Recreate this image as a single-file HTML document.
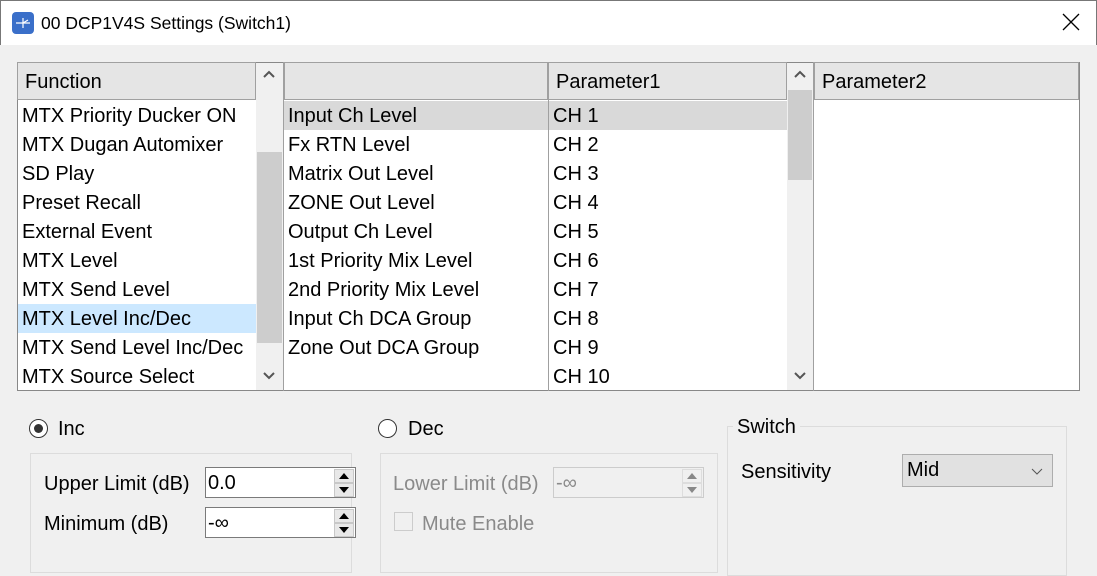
<!DOCTYPE html>
<html><head><meta charset="utf-8"><style>
*{box-sizing:border-box;margin:0;padding:0}
body{width:1097px;height:561px;overflow:hidden;background:#f0f0f0;font-family:"Liberation Sans",sans-serif;font-size:20px;color:#000;position:relative}
.a{position:absolute}
svg{display:block}
.title{left:0;top:0;width:1097px;height:45px;background:#fff;border-left:1px solid #777;border-top:1px solid #777;border-right:1px solid #777}
.hdr{background:#e5e5e5;border:1px solid #a0a0a0;height:38px;line-height:38px;padding-left:7px}
.row{position:absolute;height:29px;line-height:30px;padding-left:4px;white-space:nowrap}
.sb{background:#f0f0f0}
.dis{color:#8a8a8a}
.spin{background:#fff;border:1px solid #7a7a7a;height:31px;line-height:30px;padding-left:2px}
.btn{position:absolute;right:1px;width:20px;height:14px;background:#e8e8e8;border:1px solid #c8c8c8}
</style></head><body>
<div class="a title"></div>
<div class="a" style="left:12px;top:12px;width:22px;height:22px;background:#3a6fc9;border-radius:4px">
<svg width="22" height="22"><path d="M4 11H18M11 6V16M11 11L16 8" stroke="#fff" stroke-width="1.2" fill="none"/></svg></div>
<div class="a" style="left:41px;top:13px;font-size:17.5px">00 DCP1V4S Settings (Switch1)</div>
<svg class="a" style="left:1062px;top:13px" width="18" height="18"><path d="M1 1L17 17M17 1L1 17" stroke="#000" stroke-width="1.3"/></svg>

<div class="a" style="left:17px;top:62px;width:1063px;height:329px;background:#fff;border:1px solid #888"></div>
<div class="a hdr" style="left:17px;top:62px;width:239px">Function</div>
<div class="a sb" style="left:256px;top:63px;width:27px;height:327px"></div>
<div class="a" style="left:257px;top:152px;width:25px;height:191px;background:#cdcdcd"></div>
<svg class="a" style="left:262px;top:68px" width="14" height="12"><path d="M2 9L7 4L12 9" stroke="#555" stroke-width="2" fill="none"/></svg>
<svg class="a" style="left:262px;top:370px" width="14" height="12"><path d="M2 3L7 8L12 3" stroke="#555" stroke-width="2" fill="none"/></svg>
<div class="a" style="left:283px;top:62px;width:1px;height:329px;background:#a0a0a0"></div>
<div class="a hdr" style="left:284px;top:62px;width:264px"></div>
<div class="a" style="left:548px;top:62px;width:1px;height:329px;background:#a0a0a0"></div>
<div class="a hdr" style="left:548px;top:62px;width:239px">Parameter1</div>
<div class="a sb" style="left:787px;top:63px;width:26px;height:327px"></div>
<div class="a" style="left:788px;top:90px;width:24px;height:90px;background:#cdcdcd"></div>
<svg class="a" style="left:793px;top:68px" width="14" height="12"><path d="M2 9L7 4L12 9" stroke="#555" stroke-width="2" fill="none"/></svg>
<svg class="a" style="left:793px;top:370px" width="14" height="12"><path d="M2 3L7 8L12 3" stroke="#555" stroke-width="2" fill="none"/></svg>
<div class="a" style="left:813px;top:62px;width:1px;height:329px;background:#a0a0a0"></div>
<div class="a hdr" style="left:814px;top:62px;width:265px">Parameter2</div>

<div class="a" style="left:18px;top:101px;width:238px;height:289px;overflow:hidden">
<div class="row" style="top:0">MTX Priority Ducker ON</div>
<div class="row" style="top:29px">MTX Dugan Automixer</div>
<div class="row" style="top:58px">SD Play</div>
<div class="row" style="top:87px">Preset Recall</div>
<div class="row" style="top:116px">External Event</div>
<div class="row" style="top:145px">MTX Level</div>
<div class="row" style="top:174px">MTX Send Level</div>
<div class="row" style="top:203px;width:238px;background:#cce8ff">MTX Level Inc/Dec</div>
<div class="row" style="top:232px">MTX Send Level Inc/Dec</div>
<div class="row" style="top:261px">MTX Source Select</div>
</div>
<div class="a" style="left:284px;top:101px;width:264px;height:289px;overflow:hidden">
<div class="row" style="top:0;width:264px;background:#d9d9d9">Input Ch Level</div>
<div class="row" style="top:29px">Fx RTN Level</div>
<div class="row" style="top:58px">Matrix Out Level</div>
<div class="row" style="top:87px">ZONE Out Level</div>
<div class="row" style="top:116px">Output Ch Level</div>
<div class="row" style="top:145px">1st Priority Mix Level</div>
<div class="row" style="top:174px">2nd Priority Mix Level</div>
<div class="row" style="top:203px">Input Ch DCA Group</div>
<div class="row" style="top:232px">Zone Out DCA Group</div>
</div>
<div class="a" style="left:549px;top:101px;width:238px;height:289px;overflow:hidden">
<div class="row" style="top:0;width:238px;background:#d9d9d9">CH 1</div>
<div class="row" style="top:29px">CH 2</div>
<div class="row" style="top:58px">CH 3</div>
<div class="row" style="top:87px">CH 4</div>
<div class="row" style="top:116px">CH 5</div>
<div class="row" style="top:145px">CH 6</div>
<div class="row" style="top:174px">CH 7</div>
<div class="row" style="top:203px">CH 8</div>
<div class="row" style="top:232px">CH 9</div>
<div class="row" style="top:261px">CH 10</div>
</div>

<div class="a" style="left:29px;top:419px;width:19px;height:19px;border-radius:50%;border:1px solid #333;background:#fff"></div>
<div class="a" style="left:34px;top:424px;width:9px;height:9px;border-radius:50%;background:#333"></div>
<div class="a" style="left:58px;top:418px">Inc</div>
<div class="a" style="left:378px;top:419px;width:19px;height:19px;border-radius:50%;border:1px solid #333;background:#fff"></div>
<div class="a" style="left:408px;top:418px">Dec</div>

<div class="a" style="left:30px;top:453px;width:322px;height:120px;border:1px solid #dcdcdc"></div>
<div class="a" style="left:380px;top:453px;width:338px;height:120px;border:1px solid #dcdcdc"></div>
<div class="a" style="left:727px;top:426px;width:340px;height:150px;border:1px solid #dcdcdc"></div>
<div class="a" style="left:733px;top:416px;background:#f0f0f0;padding:0 4px">Switch</div>

<div class="a" style="left:44px;top:473px">Upper Limit (dB)</div>
<div class="a spin" style="left:205px;top:467px;width:151px">0.0<div class="btn" style="top:1px"><svg width="18" height="12"><path d="M4 9L9 3L14 9Z" fill="#000"/></svg></div><div class="btn" style="top:15px"><svg width="18" height="12"><path d="M4 3L9 9L14 3Z" fill="#000"/></svg></div></div>
<div class="a" style="left:44px;top:513px">Minimum (dB)</div>
<div class="a spin" style="left:205px;top:507px;width:151px">-∞<div class="btn" style="top:1px"><svg width="18" height="12"><path d="M4 9L9 3L14 9Z" fill="#000"/></svg></div><div class="btn" style="top:15px"><svg width="18" height="12"><path d="M4 3L9 9L14 3Z" fill="#000"/></svg></div></div>

<div class="a dis" style="left:393px;top:473px">Lower Limit (dB)</div>
<div class="a spin dis" style="left:553px;top:467px;width:151px;background:#f0f0f0;border-color:#ccc">-∞<div class="btn" style="top:1px;background:#f0f0f0;border-color:#ddd"><svg width="18" height="12"><path d="M4 9L9 3L14 9Z" fill="#888"/></svg></div><div class="btn" style="top:15px;background:#f0f0f0;border-color:#ddd"><svg width="18" height="12"><path d="M4 3L9 9L14 3Z" fill="#888"/></svg></div></div>
<div class="a" style="left:394px;top:512px;width:19px;height:19px;border:1px solid #ccc;background:#f0f0f0"></div>
<div class="a dis" style="left:422px;top:513px">Mute Enable</div>

<div class="a" style="left:741px;top:461px">Sensitivity</div>
<div class="a" style="left:902px;top:454px;width:151px;height:33px;background:#e1e1e1;border:1px solid #adadad;line-height:31px;padding-left:4px">Mid
<svg class="a" style="left:128px;top:11px" width="12" height="10"><path d="M1 3L6 8L11 3" stroke="#555" stroke-width="1" fill="none"/></svg></div>
</body></html>
